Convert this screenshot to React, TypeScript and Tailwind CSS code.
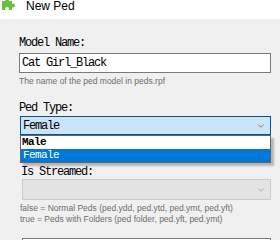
import { ChevronDown } from 'lucide-react'

const mono = "font-mono text-[12px] tracking-[-1.2px]"
const hint = "font-['Liberation_Sans',Arial,sans-serif] text-[8.5px] leading-[11px] text-[#6d6d6d]"

function PuzzleIcon() {
  return (
    <svg width="15" height="12" viewBox="0 0 15 12" className="shrink-0">
      <path
        d="M1 3h3.5c-.8-1.6.2-3 1.6-3s2.4 1.4 1.6 3H11v3c1.6-.8 3 .2 3 1.6s-1.4 2.4-3 1.6V12H7.7c.8-1.6-.2-3-1.6-3s-2.4 1.4-1.6 3H1z"
        fill="#6abf3c"
      />
    </svg>
  )
}

export default function App() {
  return (
    <div className="w-[280px] h-[240px] overflow-hidden bg-[#f0f0f0] flex flex-col">
      {/* title bar */}
      <div className="h-[19px] bg-white flex items-start gap-[10px] pl-[1px] shrink-0">
        <div className="-mt-[2px]">
          <PuzzleIcon />
        </div>
        <span className="font-['Liberation_Sans',Arial,sans-serif] text-[12px] leading-[12px] text-black">
          New Ped
        </span>
      </div>

      {/* form */}
      <div className="flex flex-col pl-[19px] pr-[9px]">
        <label className={`${mono} leading-[14px] mt-[17px] text-black`}>Model Name:</label>
        <div className="mt-[3px] h-[20px] border border-[#7a7a7a] bg-white flex items-center px-[2px]">
          <span className={`${mono} leading-[14px] text-black`}>Cat Girl_Black</span>
        </div>
        <p className={`${hint} mt-[3px]`}>The name of the ped model in peds.rpf</p>

        <label className={`${mono} leading-[14px] mt-[14px] text-black`}>Ped Type:</label>
        <div className="relative mt-[1px] mb-[30px]">
          <div className="h-[19px] border border-[#005499] bg-[#cce4f7] flex items-center justify-between pl-[2px] pr-[4px] ml-[1px]">
            <span className={`${mono} leading-[14px] text-black`}>Female</span>
            <ChevronDown size={10} strokeWidth={1.5} className="text-[#444]" />
          </div>
          {/* open list */}
          <div className="absolute left-[1px] right-0 top-[19px] border border-[#646464] bg-white shadow-[3px_3px_2px_rgba(0,0,0,0.25)] z-10 flex flex-col">
            <div className="font-mono text-[11px] tracking-[-0.6px] h-[13px] leading-[13px] text-black pl-[1px] font-bold overflow-hidden">Male</div>
            <div className="font-mono text-[11px] tracking-[-0.6px] h-[13px] leading-[13px] bg-[#0078d7] text-white pl-[2px] overflow-hidden">Female</div>
          </div>
        </div>

        <label className={`${mono} leading-[14px] ml-[2px] text-black`}>Is Streamed:</label>
        <div className="mt-[0px] h-[21px] border border-[#cccccc] bg-[#e3e3e3] flex items-center justify-end pr-[4px] ml-[3px]">
          <ChevronDown size={10} strokeWidth={1.5} className="text-[#888]" />
        </div>
        <div className="mt-[3px] ml-[1px] flex flex-col">
          <p className={hint}>false = Normal Peds (ped.ydd, ped.ytd, ped.ymt, ped.yft)</p>
          <p className={hint}>true = Peds with Folders (ped folder, ped.yft, ped.ymt)</p>
        </div>
        <div className="mt-[13px] h-[20px] border border-[#7a7a7a] bg-white ml-[3px]" />
      </div>
    </div>
  )
}
